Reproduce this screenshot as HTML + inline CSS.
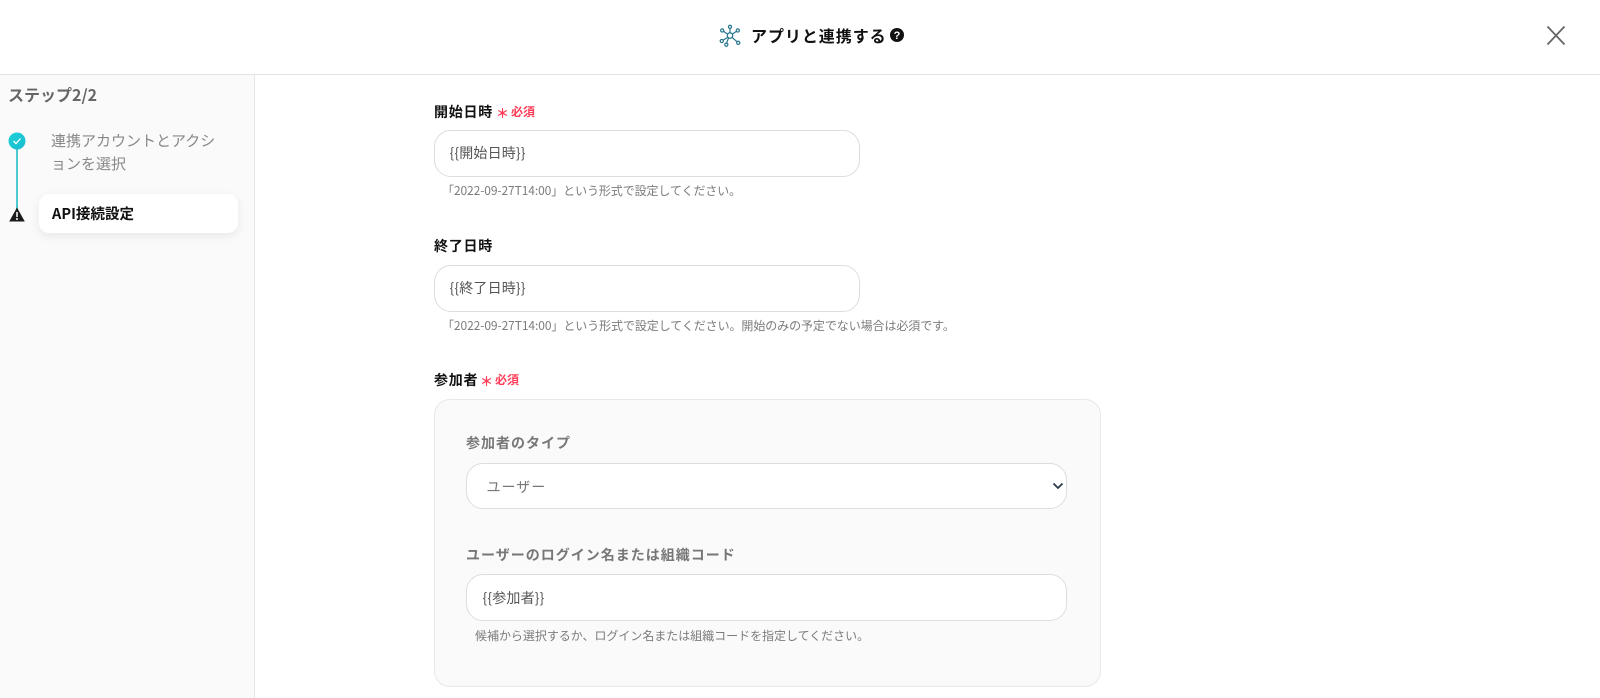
<!DOCTYPE html>
<html lang="ja"><head><meta charset="utf-8"><style>
html,body{margin:0;padding:0;width:1600px;height:698px;overflow:hidden;background:#fff}
body{font-family:"Noto Sans CJK JP","Liberation Sans",sans-serif;position:relative}
.a{position:absolute;white-space:nowrap;line-height:20px}
.l{font-size:14px;font-weight:700;color:#111;letter-spacing:.75px}
.r{font-size:12px;font-weight:700;color:#ff3b55}
.s{font-size:13px;font-weight:700;color:#ff3b55;font-family:"Noto Sans CJK JP",sans-serif}
.i{position:absolute;box-sizing:border-box;background:#fff;border:1.5px solid #dcdde1;border-radius:17px;height:47px;font-size:14px;color:#555;line-height:44px;padding-left:14.500px;letter-spacing:.15px}
.h{font-size:12px;color:#7c7c7c}
.g{font-size:14px;font-weight:700;color:#777;letter-spacing:.5px}
</style></head><body>
<div class="a" style="left:0;top:74px;width:1600px;height:1px;background:#e3e3e3;line-height:0"></div>
<div class="a" style="left:0;top:75px;width:254px;height:623px;background:#fafafa;border-right:1px solid #e6e6e6"></div>
<svg class="a" style="left:719px;top:23px" width="22" height="25" viewBox="0 0 24 26" fill="none" stroke="#24748c" stroke-width="1.300"><circle cx="12" cy="13" r="3"/><path d="M12 10V5M9.500 11.500 5 8.500M14.500 11.500 19 8.500M9.500 15 4.500 18M10.500 15.500 8 22M14 15 20 20"/><circle cx="12" cy="3.500" r="1.700"/><circle cx="3.500" cy="7.500" r="1.700"/><circle cx="20.500" cy="7.500" r="1.700"/><circle cx="3" cy="19" r="1.700"/><circle cx="8" cy="23" r="1.700"/><circle cx="21" cy="21" r="1.700"/></svg>
<div class="a" style="left:751px;top:25px;font-size:16px;font-weight:700;color:#111;letter-spacing:.95px">アプリと連携する</div>
<svg class="a" style="left:890px;top:28px" width="14" height="14" viewBox="0 0 14 14"><circle cx="7" cy="7" r="7" fill="#111"/><text x="7" y="11" font-size="11" font-weight="700" fill="#fff" text-anchor="middle" font-family="Liberation Sans">?</text></svg>
<svg class="a" style="left:1546px;top:25px" width="20" height="21" viewBox="0 0 20 21" stroke="#666" stroke-width="1.800"><path d="M1.500 1.500 18.500 19.500M18.500 1.500 1.500 19.500"/></svg>
<div class="a" style="left:8px;top:84px;font-size:16px;font-weight:700;color:#666">ステップ2/2</div>
<div class="a" style="left:16px;top:147px;width:2px;height:62px;background:#4cc9d3"></div>
<svg class="a" style="left:8px;top:132px" width="18" height="18" viewBox="0 0 18 18"><defs><linearGradient id="x" x1="0" y1="0" x2="1" y2="1"><stop offset="0" stop-color="#1fd0d8"/><stop offset="1" stop-color="#18bcd0"/></linearGradient></defs><circle cx="9" cy="9" r="8.500" fill="url(#x)"/><path d="M5.500 9 8 11.500 12.500 6.500" fill="none" stroke="#fff" stroke-width="1.300"/></svg>
<svg class="a" style="left:9px;top:207px" width="16" height="15" viewBox="0 0 16 15"><path d="M8 .5 15.800 14.500H.2Z" fill="#1a1a1a"/><path d="M8 5v5M8 11v2" stroke="#fff" stroke-width="1.500"/></svg>
<div class="a" style="left:51px;top:129px;font-size:15px;line-height:23px;color:#888;white-space:normal;width:170px">連携アカウントとアクションを選択</div>
<div class="a" style="left:39px;top:194px;width:199px;height:39px;background:#fff;border-radius:10px;box-shadow:0 3px 10px rgba(0,0,0,.08)"></div>
<div class="a" style="left:52px;top:204px;font-size:14.500px;font-weight:700;color:#111;letter-spacing:.05px">API接続設定</div>

<div class="a l" style="left:434px;top:102px">開始日時</div>
<div class="a s" style="left:496px;top:103px">＊</div>
<div class="a r" style="left:511px;top:102px">必須</div>
<div class="i" style="left:434px;top:130px;width:426px">{{開始日時}}</div>
<div class="a h" style="left:442px;top:181px;letter-spacing:-.09px">「2022-09-27T14:00」という形式で設定してください。</div>

<div class="a l" style="left:434px;top:236px">終了日時</div>
<div class="i" style="left:434px;top:265px;width:426px">{{終了日時}}</div>
<div class="a h" style="left:442px;top:316px;letter-spacing:-.08px">「2022-09-27T14:00」という形式で設定してください。開始のみの予定でない場合は必須です。</div>

<div class="a l" style="left:434px;top:370px">参加者</div>
<div class="a s" style="left:480px;top:371px">＊</div>
<div class="a r" style="left:495px;top:370px">必須</div>
<div class="a" style="left:434px;top:399px;width:665px;height:286px;background:#fafafa;border:1px solid #e8e8e8;border-radius:16px"></div>
<div class="a g" style="left:466px;top:433px;letter-spacing:1px">参加者のタイプ</div>
<div class="i" style="left:466px;top:463px;width:601px;height:46px;color:#777;line-height:47px;padding-left:19.500px;letter-spacing:1px">ユーザー</div>
<svg class="a" style="left:1052px;top:482px" width="12" height="8" viewBox="0 0 12 8"><path d="M1.500 1.500 6 6 10.500 1.500" fill="none" stroke="#2b3a4a" stroke-width="1.800"/></svg>
<div class="a g" style="left:466px;top:545px;letter-spacing:1px">ユーザーのログイン名または組織コード</div>
<div class="i" style="left:466px;top:574px;width:601px;line-height:47px;padding-left:15.500px">{{参加者}}</div>
<div class="a h" style="left:475px;top:626px;letter-spacing:-.03px">候補から選択するか、ログイン名または組織コードを指定してください。</div>
</body></html>
